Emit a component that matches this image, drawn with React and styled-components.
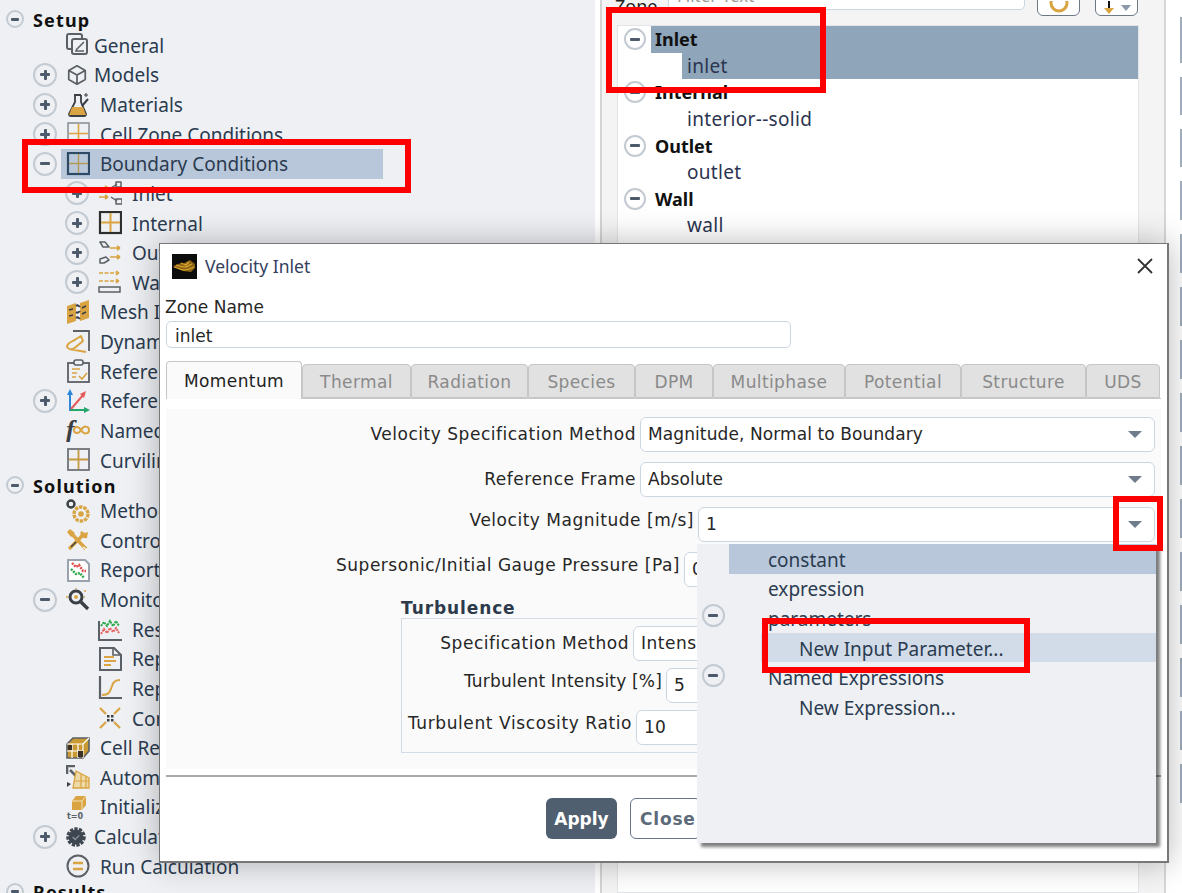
import React from "react";
import styled, { createGlobalStyle } from "styled-components";

const Global = createGlobalStyle`
  html, body { margin: 0; padding: 0; background: #fff; overflow: hidden; }
  * { box-sizing: border-box; }
`;
const uiFont = `"Noto Sans", "Open Sans", sans-serif`;
const formFont = `"DejaVu Sans", "Liberation Sans", sans-serif`;

const Page = styled.div`
  position: relative; width: 1182px; height: 893px; overflow: hidden; display: flex; background: #fff;
`;
const TreePanel = styled.nav`
  width: 595px; flex: none; height: 100%; padding-top: 7.5px; background: #eef0f3; overflow: hidden;
  font-family: ${uiFont}; font-size: 19px; color: #2b3b50;
`;
const TreeRow = styled.div`
  display: flex; align-items: center; height: ${p => p.$h || 29.63}px; padding-left: ${p => p.$indent}px;
`;
const ExpandSlot = styled.div`
  flex: none; width: ${p => p.$w}px; display: flex; align-items: center;
`;
const ExpCircle = styled.span`
  display: flex; align-items: center; justify-content: center; flex: none;
  width: ${p => p.$d}px; height: ${p => p.$d}px; border-radius: 50%;
  border: 2px solid #c3cad2; background: transparent;
`;
const ExpMark = styled.span`
  position: relative; display: block; width: ${p => p.$s}px; height: 3px; background: #4c5a6b; border-radius: 1px;
  ${p => p.$plus && `&::after { content: ""; position: absolute; left: ${p.$s / 2 - 1.5}px; top: ${-(p.$s - 3) / 2}px; width: 3px; height: ${p.$s}px; background: #4c5a6b; border-radius: 1px; }`}
`;
const RowBody = styled.div`
  display: flex; align-items: center; height: 100%;
  width: ${p => p.$w ? p.$w + "px" : "auto"};
  background: ${p => p.$on ? "#b8c8da" : "transparent"};
  padding-left: 5px;
`;
const IconSlot = styled.span`
  flex: none; display: flex; width: ${p => p.$w}px; height: 24px; align-items: center;
`;
const TreeLabel = styled.span`
  white-space: nowrap; font-weight: ${p => p.$bold ? 700 : 400};
  color: ${p => p.$bold ? "#111" : "inherit"};
  letter-spacing: ${p => p.$bold ? "1.15px" : "0"};
  font-size: ${p => p.$bold ? "18px" : "inherit"};
  padding-top: 1px;
`;

const ZonePanel = styled.section`
  position: relative; width: 566px; flex: none; height: 100%; margin-left: 5px; display: flex; flex-direction: column;
  background: #f4f4f4; border-left: 2px solid #d4d4d4; border-right: 2px solid #d6d6d6; padding: 0 25px 0 15px;
  font-family: ${uiFont}; font-size: 19px; color: #2b3b50;
`;
const ZoneBar = styled.div`
  flex: none; height: 16px; display: flex; align-items: flex-end; gap: 0;
`;
const ZoneTitle = styled.span`
  width: 53px; line-height: 20px; color: #222; font-size: 18px; margin-left: -2px; padding-right: 0;
`;
const FilterBox = styled.div`
  width: 357px; height: 26px; border: 1px solid #ccd6e2; border-radius: 5px; background: #fff;
  color: #9a9a9a; padding-left: 8px; line-height: 22px; font-size: 17px; margin-bottom: 6px;
`;
const ToolBtn = styled.div`
  width: 43px; height: 32px; margin-left: ${p => p.$ml}px; border: 1.5px solid #6d7885; border-radius: 6px; background: #fff;
  display: flex; align-items: flex-end; justify-content: center;
`;
const ZoneList = styled.div`
  flex: 1; margin-top: 9px; background: #fff; border: 1px solid #e2e4e7;
`;
const ZoneRow = styled.div`
  display: flex; height: 26.6px; align-items: center;
`;
const ZoneExpSlot = styled.div`
  flex: none; width: ${p => p.$w}px; display: flex; justify-content: center; align-items: center;
`;
const ZoneText = styled.div`
  flex: 1; height: 100%; display: flex; align-items: center; padding-left: ${p => p.$pad}px;
  background: ${p => p.$on ? "#8fa5ba" : "transparent"};
  font-weight: ${p => p.$bold ? 700 : 400};
  font-size: ${p => p.$bold ? "18px" : "19px"};
  letter-spacing: ${p => p.$bold ? "0" : "0.3px"};
  color: ${p => p.$bold ? "#111" : "#2b3450"};
`;
const RightRail = styled.aside`
  flex: 1; display: flex; flex-direction: column; align-items: flex-end; gap: 14px; padding-top: 17px; background: #fff;
`;
const RailTab = styled.div`
  width: 2px; height: ${p => p.$h}px; flex: none; background: #9fadbb;
`;

const Dialog = styled.div`
  position: absolute; left: 159px; top: 243px; width: 1010px; height: 620px;
  background: #fff; border: 1px solid #777; border-width: 1px 2px 2px 1px;
  box-shadow: 0 0 30px rgba(0,0,0,.28); display: flex; flex-direction: column;
  font-family: ${formFont}; font-size: 17px; color: #262626;
`;
const TitleBar = styled.header`
  flex: none; height: 44px; margin-bottom: 1px; display: flex; align-items: center; padding: 0 13px 0 12px; gap: 8px;
`;
const TitleText = styled.span`
  font-family: ${uiFont}; font-size: 17.5px; color: #34405e; flex: 1;
`;
const DialogBody = styled.div`
  flex: 1; padding: 0 6px; display: flex; flex-direction: column;
`;
const FieldCaption = styled.div`
  height: 27px; line-height: 27px; margin-top: 5px; margin-left: -1px;
`;
const NameInput = styled.div`
  width: 625px; height: 27px; border: 1.5px solid #ccd6e2; border-radius: 5px; padding: 2px 0 0 8px; line-height: 25px;
`;
const TabStrip = styled.div`
  display: flex; height: 37px; margin-top: 14px; align-items: flex-end; border-bottom: 1px solid #c8c8c8; width: 995px;
`;
const Tab = styled.div`
  flex: none; width: ${p => p.$w}px; height: ${p => p.$active ? 38 : 34}px; padding-top: 1px;
  display: flex; align-items: center; justify-content: center; letter-spacing: 0.4px;
  background: ${p => p.$active ? "#fafafa" : "#e1e1e1"};
  border: 1px solid #c6c6c6; border-bottom: ${p => p.$active ? "none" : "1px solid #c6c6c6"}; border-radius: 4px 4px 0 0;
  color: ${p => p.$active ? "#222" : "#8a8a8a"};
  position: relative; top: ${p => p.$active ? 1 : 0}px;
`;
const FormPane = styled.div`
  width: 995px; height: 360px; margin-top: 10px; background: #fafafa; padding: 8px 6px 0 0;
  display: flex; flex-direction: column;
`;
const FormRow = styled.div`
  flex: none; display: flex; align-items: center; height: 35px; gap: 4px; margin-bottom: ${p => p.$mb ?? 10}px;
`;
const FormLabel = styled.div`
  flex: none; width: ${p => p.$w}px; text-align: right; white-space: nowrap;
  letter-spacing: ${p => p.$ls ?? 0.52}px;
  padding-bottom: ${p => p.$raised ? 10 : 1}px;
`;
const FieldBox = styled.div`
  flex: 1; height: 35px; border: 1.5px solid #ccd6e2; border-radius: 6px; background: #fff; letter-spacing: ${p => p.$ls ?? 0.1}px;
  display: flex; align-items: center; justify-content: space-between; padding: 0 12px 1px 7px; white-space: nowrap;
`;
const Caret = styled.span`
  flex: none; width: 0; height: 0; border-left: 7px solid transparent; border-right: 7px solid transparent; border-top: 7px solid #6f7c8b;
`;
const GroupTitle = styled.div`
  margin: 11px 0 0 235px; height: 20px; line-height: 20px; font-weight: 700; color: #2c3a4c; letter-spacing: 0.9px;
`;
const GroupBox = styled.div`
  margin-left: 235px; width: 700px; height: 135px; border: 1.5px solid #d2dbe6; padding: 7px 8px 0 0;
`;
const Separator = styled.hr`
  margin: 6px 0 0; width: 995px; border: none; border-top: 2px solid #a9a9a9;
`;
const DialogFooter = styled.footer`
  flex: 1; display: flex; align-items: flex-start; gap: 13px; padding: 21px 0 0 380px;
`;
const ApplyButton = styled.div`
  width: 71px; height: 41px; border-radius: 6px; background: #4f5f70; color: #fff; font-weight: 700;
  display: flex; align-items: center; justify-content: center;
`;
const CloseButton = styled.div`
  width: 71px; height: 41px; border-radius: 6px; background: #fff; border: 1.5px solid #66758a; color: #5c6a7a; font-weight: 700;
  display: flex; align-items: center; justify-content: flex-start; padding-left: 9px; letter-spacing: 0.8px; white-space: nowrap;
`;

const Menu = styled.div`
  position: absolute; left: 697px; top: 544px; width: 459px; height: 299px; background: #eef0f3;
  box-shadow: 4px 4px 3px rgba(0,0,0,.5); font-family: ${uiFont}; font-size: 19px; color: #2b3b50;
`;
const MenuRow = styled.div`
  display: flex; height: 29.6px; align-items: center;
`;
const MenuSlot = styled.div`
  flex: none; width: ${p => p.$w}px; display: flex; justify-content: center; align-items: center; position: relative; top: ${p => p.$top || 0}px;
`;
const MenuText = styled.div`
  flex: 1; height: 100%; display: flex; align-items: center; padding: 2px 0 0 ${p => p.$pad}px;
  background: ${p => p.$bg || "transparent"};
`;

const RedBox = styled.div`
  position: absolute; left: ${p => p.$x}px; top: ${p => p.$y}px; width: ${p => p.$w}px; height: ${p => p.$h}px;
  border: 6px solid #ff0000; pointer-events: none;
`;

const O = "#d9a441", G = "#5b6066", D = "#3a3f45";

const Svg = ({ children, w = 24, h = 24 }) => (
  <svg width={w} height={h} viewBox="0 0 24 24" fill="none">{children}</svg>
);

const icons = {
  general: <Svg><rect x="1" y="1" width="15" height="15" rx="2" stroke={G} strokeWidth="2" /><rect x="6" y="6" width="15" height="15" rx="2" fill="#eef0f3" stroke={G} strokeWidth="2" /><path d="M10 17l8-8M9 18h9" stroke={G} strokeWidth="1.6" /></Svg>,
  cube: <Svg w={22} h={22}><path d="M12 2l9 5v10l-9 5-9-5V7z M3 7l9 5 9-5M12 12v10" stroke={G} strokeWidth="1.9" strokeLinejoin="round" /></Svg>,
  flask: <Svg><path d="M8 2h7M9 2v7L3 21q0 2 2 2h13q2 0 2-2l-5-12V2" stroke={D} strokeWidth="1.8" /><path d="M6 14h11l3 8H3z" fill={O} /><path d="M16 13l6-7" stroke={D} strokeWidth="2" /><path d="M20 0v4M18 2h4" stroke={D} strokeWidth="1" /></Svg>,
  grid: <Svg><rect x="2" y="1" width="21" height="21" stroke="#8d939a" strokeWidth="1.6" /><path d="M12.5 2v19M3 11.5h19" stroke={O} strokeWidth="1.6" /></Svg>,
  gridSel: <Svg><rect x="2" y="1" width="21" height="21" stroke="#2d4a66" strokeWidth="2.2" /><path d="M12.5 2v19M3 11.5h19" stroke="#b49a5a" strokeWidth="1.4" /></Svg>,
  gridDark: <Svg><rect x="2" y="1" width="21" height="21" stroke="#2e2e2e" strokeWidth="2.2" /><path d="M12.5 2v19M3 11.5h19" stroke={O} strokeWidth="2" /></Svg>,
  gridCurv: <Svg><rect x="2" y="1" width="21" height="21" stroke="#6e7379" strokeWidth="1.8" /><path d="M12.5 2v19M3 11.5h19" stroke="#c69a42" strokeWidth="1.8" /></Svg>,
  inlet: <Svg><path d="M1 7h9M10 7l-3-2M10 7l-3 2M1 16h9M10 16l-3-2M10 16l-3 2" stroke={O} strokeWidth="1.6" /><path d="M13 7l6-4M13 16l6 4" stroke={G} strokeWidth="1.4" /><path d="M18 1h5v5h-5zM18 18h6v5h-6z" stroke={G} strokeWidth="1.5" strokeLinejoin="round" /></Svg>,
  outlet: <Svg><path d="M12 7h10M22 7l-3-2M22 7l-3 2M12 16h10M22 16l-3-2M22 16l-3 2" stroke={O} strokeWidth="1.6" /><path d="M2 1h5l4 5-6 0zM2 22l0-4 6-2 3 3-5 3z" stroke={G} strokeWidth="1.5" strokeLinejoin="round" /></Svg>,
  wall: <Svg><path d="M1 3h20M21 3l-3-2M21 3l-3 2M1 11h20M21 11l-3-2M21 11l-3 2" stroke={O} strokeWidth="1.5" strokeDasharray="4 1.5" /><rect x="1" y="17" width="21" height="5" stroke={G} strokeWidth="1.5" /></Svg>,
  mesh: <Svg><path d="M1 6l9-3v18l-9 3z M14 3l9-3v18l-9 3z" fill={O} /><path d="M10 6c2-2 3 1 4 0M10 12c2 2 3-1 4 0M10 18c2-2 3 1 4 0" stroke={D} strokeWidth="2" /><path d="M3 10l4-1M3 16l4-1M16 8l4-2M16 14l4-2" stroke={D} strokeWidth="1.5" /></Svg>,
  dynamic: <Svg><path d="M7 1h16v20" stroke={G} strokeWidth="1.8" /><path d="M1 17c0-5 6-5 9-8l5-3 2 5-6 5c-3 3-7 5-10 1z M3 19l17 3" stroke={O} strokeWidth="2" strokeLinejoin="round" /></Svg>,
  clipboard: <Svg><rect x="2" y="4" width="21" height="19" stroke={G} strokeWidth="1.8" /><rect x="8" y="1" width="9" height="5" rx="2" fill="#eef0f3" stroke={G} strokeWidth="1.6" /><path d="M6 10h8M6 14h5M6 18h4" stroke={O} strokeWidth="1.7" /><path d="M13 17l3 3 5-6" stroke={O} strokeWidth="1.7" /></Svg>,
  axes: <Svg><path d="M4 22V4" stroke="#2a86d8" strokeWidth="2" /><path d="M4 0l-3 6h6z" fill="#2a86d8" /><path d="M4 21h16" stroke="#23a56c" strokeWidth="2" /><path d="M24 21l-6-3v6z" fill="#23a56c" /><path d="M5 20L18 5" stroke="#e65a5a" strokeWidth="2" /><path d="M20 2l-6 3 4 4z" fill="#e65a5a" /></Svg>,
  fx: <Svg><text x="0" y="20" fontFamily="Liberation Serif, serif" fontStyle="italic" fontWeight="700" fontSize="26" fill={D}>f</text><path d="M15 12c-3-5-7-3-7 0s4 5 7 0c3-5 8-4 8 0s-5 5-8 0z" stroke={O} strokeWidth="2" /></Svg>,
  methods: <Svg><circle cx="5" cy="5" r="3.5" stroke={D} strokeWidth="2.4" /><circle cx="15" cy="15" r="7" stroke={O} strokeWidth="3.4" strokeDasharray="3.4 1" /><circle cx="15" cy="15" r="2.8" fill={O} /></Svg>,
  controls: <Svg><path d="M3 21L17 7" stroke={O} strokeWidth="3.4" /><path d="M15 3a5 5 0 0 0 6 7l1-6-3 1z" fill={O} /><path d="M5 19l5-5" stroke={D} strokeWidth="1.4" /><path d="M4 4l16 17" stroke={O} strokeWidth="3.4" /><path d="M1 4l3-3 5 4-4 4z" fill={O} /><path d="M17 19l4 3" stroke="#fff" strokeWidth="1.2" /></Svg>,
  chart: <Svg><path d="M2 2h17l4 4v17H2z" fill="#fff" stroke="#9aa3ad" strokeWidth="2" /><path d="M6 5l4 4 3-2 4 6 3 0" stroke="#e34b4b" strokeWidth="2.4" strokeDasharray="2 1" /><path d="M5 11l5 5 4-1 4 5" stroke="#2aa84a" strokeWidth="2.4" strokeDasharray="2 1" /></Svg>,
  zoom: <Svg><circle cx="10" cy="9" r="6" stroke={D} strokeWidth="3" /><circle cx="10" cy="9" r="2" fill={O} /><path d="M15 14l7 7" stroke={D} strokeWidth="3.4" /><path d="M0 9h2M18 3h2M18 9h1M10 0v1" stroke={O} strokeWidth="1.3" /></Svg>,
  residual: <Svg><path d="M1 4v19h23" stroke={G} strokeWidth="2" /><path d="M3 9l3-4 3 4 3-5 3 5 3-5 3 5" stroke="#2aa84a" strokeWidth="2" strokeDasharray="2 .8" /><path d="M3 17l3-5 3 4 3-5 3 4 3-4 3 5" stroke="#e86060" strokeWidth="2" strokeDasharray="2 .8" /></Svg>,
  reportFile: <Svg><path d="M2 1h14l7 7v15H2z" stroke={G} strokeWidth="2" /><path d="M15 1v7h8" stroke={G} strokeWidth="1.6" /><path d="M6 10h10M6 14h12M6 18h7" stroke={O} strokeWidth="2.2" /></Svg>,
  reportPlot: <Svg><path d="M2 0v22h22" stroke={G} strokeWidth="2.2" /><path d="M4 19c8 0 8-4 10-9 1-4 3-6 8-6" stroke={O} strokeWidth="2" /></Svg>,
  converge: <Svg><path d="M2 2l6 6M22 2l-6 6M2 22l6-6M22 22l-6-6" stroke={O} strokeWidth="2.2" /><path d="M9 9h2.5v2.5H9zM13 9h2.5v2.5H13zM9 13h2.5v2.5H9zM13 13h2.5v2.5H13z" fill={D} /></Svg>,
  cellReg: <Svg><path d="M1 8l6-6h16v13l-6 7H1z" fill="#c99a32" stroke={G} strokeWidth="1.6" /><path d="M1 15h16M6 8v14M12 8v14M1 8h16M17 8v14M17 8l6-6" stroke="#fff" strokeWidth="1.2" /><path d="M2 9h4v5H2zM12 15h5v6h-5z" fill="#3a3226" /></Svg>,
  auto: <Svg><path d="M1 9V1h8M4 5l14 14" stroke={G} strokeWidth="2.6" /><path d="M10 6l13 7v10H7z" fill="#eed9a8" stroke={O} strokeWidth="1.3" /><path d="M9 16h14M15 9v14M20 12v11" stroke={O} strokeWidth="1.2" /><path d="M1 17l4 2-4 3z" fill={D} /></Svg>,
  init: <Svg><path d="M6 6l4-5h10v9l-4 5H6z" fill={O} /><path d="M6 6h10v9M16 6l4-5" stroke="#f4e3b7" strokeWidth="1" /><text x="1" y="23.5" fontFamily="DejaVu Sans, sans-serif" fontWeight="700" fontSize="8" fill={G}>t=0</text></Svg>,
  calc: <Svg w={20} h={24}><circle cx="12" cy="12" r="9" fill="#3e4650" /><circle cx="12" cy="12" r="10" stroke="#3e4650" strokeWidth="3.4" strokeDasharray="4 1.6" /><path d="M8 12l3 3 5-5" stroke="#8894a2" strokeWidth="1.5" /></Svg>,
  run: <Svg><circle cx="12" cy="12" r="10.5" stroke={G} strokeWidth="2" /><path d="M7 9h10M7 15h10" stroke={O} strokeWidth="2.4" /></Svg>,
};

const treeRows = [
  { level: 0, exp: "-", label: "Setup", bold: true, h: 23 },
  { level: 1, icon: "general", label: "General", iw: 28 },
  { level: 1, exp: "+", icon: "cube", label: "Models", iw: 28 },
  { level: 1, exp: "+", icon: "flask", label: "Materials" },
  { level: 1, exp: "+", icon: "grid", label: "Cell Zone Conditions" },
  { level: 1, exp: "-", icon: "gridSel", label: "Boundary Conditions", on: true },
  { level: 2, exp: "+", icon: "inlet", label: "Inlet" },
  { level: 2, exp: "+", icon: "gridDark", label: "Internal" },
  { level: 2, exp: "+", icon: "outlet", label: "Outlet" },
  { level: 2, exp: "+", icon: "wall", label: "Wall" },
  { level: 1, icon: "mesh", label: "Mesh Interfaces" },
  { level: 1, icon: "dynamic", label: "Dynamic Mesh" },
  { level: 1, icon: "clipboard", label: "Reference Values" },
  { level: 1, exp: "+", icon: "axes", label: "Reference Frames" },
  { level: 1, icon: "fx", label: "Named Expressions" },
  { level: 1, icon: "gridCurv", label: "Curvilinear Coordinate System" },
  { level: 0, exp: "-", label: "Solution", bold: true, h: 21 },
  { level: 1, icon: "methods", label: "Methods" },
  { level: 1, icon: "controls", label: "Controls" },
  { level: 1, icon: "chart", label: "Report Definitions" },
  { level: 1, exp: "-", icon: "zoom", label: "Monitors" },
  { level: 2, icon: "residual", label: "Residual" },
  { level: 2, icon: "reportFile", label: "Report Files" },
  { level: 2, icon: "reportPlot", label: "Report Plots" },
  { level: 2, icon: "converge", label: "Convergence Conditions" },
  { level: 1, icon: "cellReg", label: "Cell Registers" },
  { level: 1, icon: "auto", label: "Automatic Mesh Adaption" },
  { level: 1, icon: "init", label: "Initialization" },
  { level: 1, exp: "+", icon: "calc", label: "Calculation Activities", iw: 28 },
  { level: 1, icon: "run", label: "Run Calculation" },
  { level: 0, exp: "-", label: "Results", bold: true, h: 21 },
];

const Expander = ({ sign, d = 24 }) => (
  <ExpCircle $d={d}><ExpMark $s={d > 20 ? 10 : 8} $plus={sign === "+"} /></ExpCircle>
);

const TreeItem = ({ r }) => {
  if (r.level === 0) {
    return (
      <TreeRow $h={r.h} $indent={6}>
        <ExpandSlot $w={27}><Expander sign={r.exp} d={18} /></ExpandSlot>
        <TreeLabel $bold>{r.label}</TreeLabel>
      </TreeRow>
    );
  }
  return (
    <TreeRow $indent={r.level === 1 ? 33 : 65}>
      <ExpandSlot $w={28}>{r.exp && <Expander sign={r.exp} />}</ExpandSlot>
      <RowBody $on={r.on} $w={r.on ? 322 : 0}>
        <IconSlot $w={r.iw || 34}>{icons[r.icon]}</IconSlot>
        <TreeLabel>{r.label}</TreeLabel>
      </RowBody>
    </TreeRow>
  );
};

const zones = [
  ["Inlet", "inlet", true],
  ["Internal", "interior--solid"],
  ["Outlet", "outlet"],
  ["Wall", "wall"],
];

const tabs = [["Momentum", 136], ["Thermal", 109], ["Radiation", 117], ["Species", 107], ["DPM", 78], ["Multiphase", 132], ["Potential", 116], ["Structure", 125], ["UDS", 74]];

export default function App() {
  return (
    <Page>
      <Global />
      <TreePanel>
        {treeRows.map(r => <TreeItem key={r.label} r={r} />)}
      </TreePanel>

      <ZonePanel>
        <ZoneBar>
          <ZoneTitle>Zone</ZoneTitle>
          <FilterBox>Filter Text</FilterBox>
          <ToolBtn $ml={12}>
            <svg width="24" height="14" viewBox="0 0 24 14" fill="none"><circle cx="12" cy="2" r="8" stroke={O} strokeWidth="3" /></svg>
          </ToolBtn>
          <ToolBtn $ml={15}>
            <svg width="32" height="14" viewBox="0 0 32 14" fill="none"><path d="M8 0v8" stroke="#111" strokeWidth="2" /><path d="M3 7h10l-5 6z" fill={O} /><path d="M20 4h10l-5 6z" fill="#8c99a8" /></svg>
          </ToolBtn>
        </ZoneBar>
        <ZoneList>
          {zones.map(([group, zone, on]) => (
            <React.Fragment key={group}>
              <ZoneRow>
                <ZoneExpSlot $w={33}><Expander sign="-" d={22} /></ZoneExpSlot>
                <ZoneText $pad={4} $on={on} $bold>{group}</ZoneText>
              </ZoneRow>
              <ZoneRow>
                <ZoneExpSlot $w={64} />
                <ZoneText $pad={5} $on={on}>{zone}</ZoneText>
              </ZoneRow>
            </React.Fragment>
          ))}
        </ZoneList>
      </ZonePanel>

      <RightRail>
        <RailTab $h={46} />
        {[38, 38, 39, 39, 39, 39, 39, 39, 39, 39, 39, 39, 39, 39].map((h, i) => <RailTab key={i} $h={h} />)}
      </RightRail>

      <Dialog>
        <TitleBar>
          <svg width="25" height="25" viewBox="0 0 25 25"><rect width="25" height="25" fill="#0c0c0c" /><path d="M1 12l10 5 8 1 4-4v-4l-5-4-4 2-3 2-2-1-8 3z" fill="#8a6414" /><path d="M2 13c5 1 6 3 10 3s6-1 10-3M4 11c4 1 6 2 9 2s4-2 7-3M9 9l5 2 3-3" stroke="#e0a92f" strokeWidth="1.1" fill="none" /></svg>
          <TitleText>Velocity Inlet</TitleText>
          <svg width="18" height="18" viewBox="0 0 18 18" fill="none"><path d="M2 2l14 14M16 2L2 16" stroke="#333" strokeWidth="1.8" /></svg>
        </TitleBar>
        <DialogBody>
          <FieldCaption>Zone Name</FieldCaption>
          <NameInput>inlet</NameInput>
          <TabStrip>
            {tabs.map(([t, w], i) => <Tab key={t} $w={w} $active={i === 0}>{t}</Tab>)}
          </TabStrip>
          <FormPane>
            <FormRow>
              <FormLabel $w={470}>Velocity Specification Method</FormLabel>
              <FieldBox>Magnitude, Normal to Boundary<Caret /></FieldBox>
            </FormRow>
            <FormRow>
              <FormLabel $w={470}>Reference Frame</FormLabel>
              <FieldBox>Absolute<Caret /></FieldBox>
            </FormRow>
            <FormRow>
              <FormLabel $w={528} $raised>Velocity Magnitude [m/s]</FormLabel>
              <FieldBox>1<Caret /></FieldBox>
            </FormRow>
            <FormRow $mb={0}>
              <FormLabel $w={514} $raised>Supersonic/Initial Gauge Pressure [Pa]</FormLabel>
              <FieldBox>0</FieldBox>
            </FormRow>
            <GroupTitle>Turbulence</GroupTitle>
            <GroupBox>
              <FormRow $mb={7}>
                <FormLabel $w={227}>Specification Method</FormLabel>
                <FieldBox $ls={0.5}>Intensity and Viscosity Ratio</FieldBox>
              </FormRow>
              <FormRow $mb={7}>
                <FormLabel $w={260} $raised $ls={0.18}>Turbulent Intensity [%]</FormLabel>
                <FieldBox>5</FieldBox>
              </FormRow>
              <FormRow $mb={0}>
                <FormLabel $w={230} $raised $ls={0.6}>Turbulent Viscosity Ratio</FormLabel>
                <FieldBox>10</FieldBox>
              </FormRow>
            </GroupBox>
          </FormPane>
          <Separator />
          <DialogFooter>
            <ApplyButton>Apply</ApplyButton>
            <CloseButton>Close</CloseButton>
          </DialogFooter>
        </DialogBody>
      </Dialog>

      <Menu>
        <MenuRow><MenuSlot $w={32} /><MenuText $pad={39} $bg="#b8c8da">constant</MenuText></MenuRow>
        <MenuRow><MenuSlot $w={32} /><MenuText $pad={39}>expression</MenuText></MenuRow>
        <MenuRow><MenuSlot $w={32} $top={-2}><Expander sign="-" d={23} /></MenuSlot><MenuText $pad={39}>parameters</MenuText></MenuRow>
        <MenuRow><MenuSlot $w={64} /><MenuText $pad={38} $bg="#d2dce8">New Input Parameter...</MenuText></MenuRow>
        <MenuRow><MenuSlot $w={32} $top={-2}><Expander sign="-" d={23} /></MenuSlot><MenuText $pad={39}>Named Expressions</MenuText></MenuRow>
        <MenuRow><MenuSlot $w={64} /><MenuText $pad={38}>New Expression...</MenuText></MenuRow>
      </Menu>

      <RedBox $x={22} $y={139} $w={389} $h={54} />
      <RedBox $x={606} $y={7} $w={220} $h={86} />
      <RedBox $x={1113} $y={496} $w={50} $h={55} />
      <RedBox $x={762} $y={618} $w={268} $h={55} />
    </Page>
  );
}
